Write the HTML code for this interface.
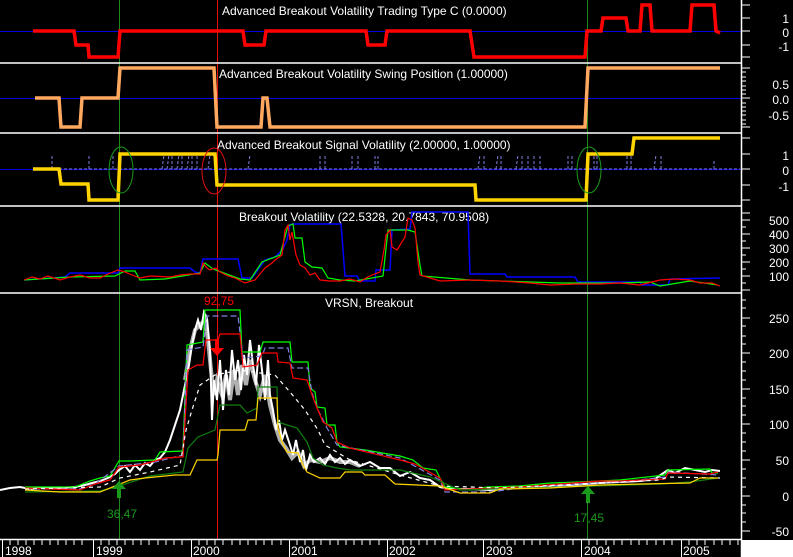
<!DOCTYPE html>
<html><head><meta charset="utf-8"><style>
html,body{margin:0;padding:0;background:#000;}
svg{display:block;}
text{font-family:"Liberation Sans",sans-serif;font-size:12px;fill:#fff;}
</style></head><body>
<svg width="793" height="557" viewBox="0 0 793 557" xmlns="http://www.w3.org/2000/svg">
<rect width="793" height="557" fill="#000"/>
<line x1="119.5" y1="0" x2="119.5" y2="539" stroke="#1a8a1a" stroke-width="1"/>
<line x1="217.5" y1="0" x2="217.5" y2="539" stroke="#e01010" stroke-width="1"/>
<line x1="587.5" y1="0" x2="587.5" y2="539" stroke="#1a8a1a" stroke-width="1"/>
<line x1="0" y1="31.5" x2="741" y2="31.5" stroke="#0000e0"/>
<line x1="0" y1="98.5" x2="741" y2="98.5" stroke="#0000e0"/>
<line x1="0" y1="169.5" x2="741" y2="169.5" stroke="#0000e0"/>
<g stroke="#fff" stroke-width="1.5">
<line x1="0" y1="63" x2="741" y2="63"/>
<line x1="0" y1="133" x2="741" y2="133"/>
<line x1="0" y1="206" x2="741" y2="206"/>
<line x1="0" y1="293" x2="741" y2="293"/>
<line x1="0" y1="539.5" x2="741" y2="539.5"/>
<line x1="741.5" y1="0" x2="741.5" y2="557"/>
</g>
<rect x="742" y="540" width="51" height="17" fill="#fff"/>
<text x="222" y="15">Advanced Breakout Volatility Trading Type C (0.0000)</text>
<text x="219" y="78">Advanced Breakout Volatility Swing Position (1.00000)</text>
<text x="217" y="149">Advanced Breakout Signal Volatility (2.00000, 1.00000)</text>
<text x="239" y="221">Breakout Volatility (22.5328, 20.7843, 70.9508)</text>
<text x="325" y="307">VRSN, Breakout</text>
<polyline fill="none" stroke="#f00" stroke-width="3.5" points="33,31 74,31 76,45 88,45 89,57 118,57 120,31 243,31 245,45 264,45 266,31 366,31 368,45 385,45 387,31 470,31 474,57 585,57 587,31 601,31 603,18 626,18 628,31 640,31 642,5 650,5 652,31 690,31 692,5 714,5 716,31 720,33"/>
<polyline fill="none" stroke="#ffa860" stroke-width="3.5" points="35,98 59,98 61,127 80,127 82,98 118,98 120,68 214,68 217,127 261,127 263,98 267,98 270,127 585,127 588,68 720,68"/>
<g stroke="#8080e0" stroke-width="1" stroke-dasharray="3,2" fill="none">
<path d="M34,169H740"/>
<path d="M52,169V155M89,169V155M113,169V155M162,169L164,155M167,169L169,155M172,169V155M177,169L179,155M182,169V155M187,169L189,155M192,169V155M197,169V155M208,169L210,155M248,169L250,155M320,169V155M325,169V155M352,169V155M358,169V155M375,169V155M378,169V155M478,169L480,155M484,169V155M496,169L498,155M501,169V155M516,169L518,155M522,169V155M528,169V155M534,169V155M540,169V155M568,169V155M572,169V155M594,169V155M597,169V155M627,169V155M631,169V155M654,169L656,155M661,169V155M714,169V160"/>
</g>
<polyline fill="none" stroke="#ffd400" stroke-width="3.5" points="33,169 59,169 61,184 88,184 89,200 118,200 120,154 215,154 217,185 475,185 476,200 586,200 588,154 632,154 634,138 720,138"/>
<ellipse cx="121" cy="170" rx="12" ry="23" fill="none" stroke="#1a9a1a"/>
<ellipse cx="214" cy="171" rx="12" ry="23" fill="none" stroke="#e01010"/>
<ellipse cx="589" cy="170" rx="12" ry="23" fill="none" stroke="#1a9a1a"/>
<polyline fill="none" stroke="#00f" stroke-width="1.5" points="24,280 65,277 70,273 118,273 120,268 190,268 195,272 200,273 203,259 238,259 242,278 252,278 265,260 275,257 283,249 287,240 290,225 292,224 341,224 345,276 357,276 360,281 375,281 376,270 390,270 392,230 410,229 412,212 468,212 470,274 505,274 507,277 575,277 578,282 640,282 642,285 668,285 670,279 720,278"/>
<polyline fill="none" stroke="#0f0" stroke-width="1.2" points="24,280 70,277 115,276 125,271 135,271 140,280 165,279 200,273 205,263 213,269 240,279 250,280 262,262 280,255 288,226 293,224 295,238 302,238 305,262 312,267 322,268 328,278 340,280 355,281 383,276 388,230 408,230 415,232 420,265 422,276 470,280 560,283 620,283 650,282 660,286 690,281 718,285"/>
<polyline fill="none" stroke="#f00" stroke-width="1.2" points="24,280 32,277 40,279 48,276 60,280 70,277 80,275 90,278 100,278 108,274 118,270 125,272 132,275 140,278 150,276 170,277 180,275 190,274 200,274 203,263 207,268 210,270 216,268 220,272 228,276 235,278 245,283 255,280 260,274 265,268 272,263 275,260 282,255 285,230 288,225 290,240 292,232 296,255 300,265 305,268 310,275 315,273 320,280 330,281 340,281 350,279 360,282 366,278 372,275 380,272 384,250 386,235 390,230 392,247 397,250 405,237 408,218 412,220 415,228 418,262 420,275 430,278 440,281 470,280 500,281 530,283 550,285 575,284 600,284 620,283 640,285 660,280 675,279 690,280 700,283 712,283 720,286"/>
<!-- gray shadow of price -->
<polyline fill="none" stroke="#b0b0b0" stroke-width="4" points="185,380 190,350 195,330 200,325 205,320 208,340 211,370 214,395 217,380 222,395 226,375 230,400 234,370 238,395 242,365 246,385 250,360 255,380 260,395 265,375 270,405 275,425 280,440 286,448 292,458 298,452 304,466 310,460 320,462 330,458 340,462 350,462 360,466"/>
<polyline fill="none" stroke="#fff" stroke-width="2" points="0,490 10,488 20,487 30,489 40,488 60,488 75,487 85,485 92,483 100,481 108,478 115,474 119,470 125,466 130,472 135,465 140,470 145,463 150,466 155,460 160,458 165,452 170,440 175,425 180,410 183,395 186,380 189,365 192,345 195,330 198,320 201,330 204,312 207,318 210,350 212,420 214,380 217,400 220,360 223,410 226,370 229,395 232,350 235,380 238,360 241,390 244,355 247,375 250,340 253,365 256,385 259,345 262,370 265,400 268,360 270,395 273,410 276,430 279,420 282,440 285,430 290,445 293,455 296,440 300,462 303,450 306,470 310,455 314,462 320,458 325,464 330,455 335,462 340,458 345,464 350,460 360,466 370,462 380,468 390,468 400,476 410,472 420,478 430,480 440,487 450,489 470,489 490,490 510,488 530,487 550,486 570,485 585,484 600,483 620,482 640,481 655,479 662,474 668,470 675,473 685,468 695,470 705,472 712,470 720,471"/>
<polyline fill="none" stroke="#0f0" stroke-width="1.2" points="25,487 75,487 90,481 100,478 110,476 119,461 130,461 155,460 160,452 182,451 183,448 187,345 203,342 205,310 240,310 242,352 260,352 263,342 290,342 292,362 308,362 310,388 315,392 317,407 325,408 327,425 335,425 337,442 340,447 365,450 400,456 413,460 423,468 436,470 440,478 445,487 470,490 487,487 520,486 550,483 580,482 620,480 665,475 668,470 710,469 712,473 718,473"/>
<polyline fill="none" stroke="#8080e0" stroke-width="1.2" stroke-dasharray="6,3" points="25,489 80,489 95,484 119,466 155,462 183,455 187,350 203,347 207,316 238,316 243,358 262,356 265,348 288,348 292,368 308,368 312,393 318,410 327,428 337,445 400,458 440,480 445,492 490,492 520,488 580,484 620,482 665,477 668,472 718,475"/>
<polyline fill="none" stroke="#f00" stroke-width="1.2" points="25,488 80,490 95,484 110,480 119,467 140,465 155,461 165,458 180,457 183,457 188,370 197,365 203,365 206,340 218,340 220,334 240,334 243,367 257,365 262,353 277,353 278,362 290,363 293,378 307,380 312,395 317,408 323,422 332,428 337,442 350,448 400,460 415,464 440,478 445,490 470,489 520,487 560,484 600,481 620,481 665,479 668,473 710,474 718,472"/>
<polyline fill="none" stroke="#fff" stroke-width="1.2" stroke-dasharray="4,4" points="25,489 100,487 120,478 150,472 180,465 186,430 192,410 200,385 215,375 240,370 260,373 275,375 290,392 305,410 318,430 325,445 350,460 400,475 440,486 500,488 580,484 660,480 668,477 720,478"/>
<polyline fill="none" stroke="#108010" stroke-width="1.2" points="25,492 100,491 119,486 150,476 183,472 188,448 198,437 215,430 220,405 240,405 247,413 257,408 258,387 277,387 278,422 287,425 297,428 307,442 313,458 323,465 337,468 350,470 400,470 430,477 460,490 560,487 660,484 690,482 718,478"/>
<polyline fill="none" stroke="#ffd400" stroke-width="1.2" points="25,490 60,492 100,492 130,480 145,478 175,475 190,475 197,460 217,460 218,455 220,430 245,430 248,420 256,420 258,398 277,398 278,428 282,442 287,452 298,453 303,465 307,472 320,478 340,478 345,472 362,472 365,475 385,475 395,484 440,486 460,493 490,493 500,489 550,488 600,485 640,484 690,483 700,478 718,478"/>
<path d="M119,481 L112,489 L117,489 L117,498 L121,498 L121,489 L126,489 Z" fill="#1a9a1a"/>
<path d="M588,486 L581,494 L586,494 L586,503 L590,503 L590,494 L595,494 Z" fill="#1a9a1a"/>
<path d="M217,356 L210,348 L215,348 L215,339 L219,339 L219,348 L224,348 Z" fill="#f00"/>
<text x="204" y="305" style="fill:#f00">92,75</text>
<text x="107" y="518" style="fill:#1a9a1a">36,47</text>
<text x="574" y="522" style="fill:#1a9a1a">17,45</text>
<g stroke="#fff" stroke-width="1">
<path d="M742,5h8M742,18h8M742,31h8M742,45h8M742,57h8"/>
<path d="M742,68h8M742,72h4M742,77h4M742,81h4M742,86h4M742,90h4M742,94h4M742,98h8M742,103h4M742,107h4M742,111h4M742,115h4M742,120h4M742,124h4M742,127h8"/>
<path d="M742,138h8M742,154h8M742,169h8M742,185h8M742,200h8"/>
<path d="M742,213h8M742,220h8M742,227h4M742,234h8M742,241h4M742,248h8M742,255h4M742,262h8M742,269h4M742,276h8M742,283h4M742,290h8"/>
<path d="M742,300h4M742,308h4M742,318h8M742,326h4M742,336h4M742,344h4M742,353h8M742,362h4M742,371h4M742,380h4M742,389h8M742,398h4M742,406h4M742,415h4M742,424h8M742,433h4M742,442h4M742,451h4M742,460h8M742,469h4M742,478h4M742,487h4M742,496h8M742,505h4M742,513h4M742,522h4M742,531h8"/>
</g>
<g text-anchor="end">
<text x="789" y="23">1</text><text x="789" y="37">0</text><text x="789" y="51">-1</text>
<text x="789" y="89">0.5</text><text x="789" y="104">0.0</text><text x="789" y="120">-0.5</text>
<text x="789" y="160">1</text><text x="789" y="175">0</text><text x="789" y="191">-1</text>
<text x="789" y="225">500</text><text x="789" y="239">400</text><text x="789" y="253">300</text><text x="789" y="267">200</text><text x="789" y="281">100</text>
<text x="789" y="323">250</text><text x="789" y="358">200</text><text x="789" y="394">150</text><text x="789" y="429">100</text><text x="789" y="465">50</text><text x="789" y="501">0</text><text x="789" y="536">-50</text>
</g>
<g stroke="#fff" stroke-width="1">
<path d="M2.5,540v17M93.5,540v17M191.5,540v17M289.5,540v17M387.5,540v17M483.5,540v17M581.5,540v17M681.5,540v17"/>
<path d="M10,540v5M18,540v5M26,540v5M34,540v5M42,540v5M50,540v5M58,540v5M66,540v5M74,540v5M82,540v5M101,540v5M109,540v5M117,540v5M125,540v5M133,540v5M141,540v5M149,540v5M158,540v5M166,540v5M174,540v5M182,540v5M199,540v5M207,540v5M215,540v5M223,540v5M232,540v5M240,540v5M248,540v5M256,540v5M264,540v5M272,540v5M281,540v5M297,540v5M305,540v5M313,540v5M321,540v5M330,540v5M338,540v5M346,540v5M354,540v5M362,540v5M370,540v5M379,540v5M395,540v5M403,540v5M411,540v5M419,540v5M427,540v5M435,540v5M443,540v5M451,540v5M459,540v5M467,540v5M475,540v5M491,540v5M499,540v5M507,540v5M515,540v5M524,540v5M532,540v5M540,540v5M548,540v5M556,540v5M564,540v5M573,540v5M589,540v5M597,540v5M606,540v5M614,540v5M622,540v5M631,540v5M639,540v5M647,540v5M656,540v5M664,540v5M672,540v5M689,540v5M697,540v5M705,540v5M714,540v5M722,540v5M730,540v5M738,540v5"/>
</g>
<text x="5" y="555">1998</text><text x="96" y="555">1999</text><text x="193" y="555">2000</text><text x="291" y="555">2001</text><text x="389" y="555">2002</text><text x="486" y="555">2003</text><text x="584" y="555">2004</text><text x="683" y="555">2005</text>
</svg>
</body></html>
